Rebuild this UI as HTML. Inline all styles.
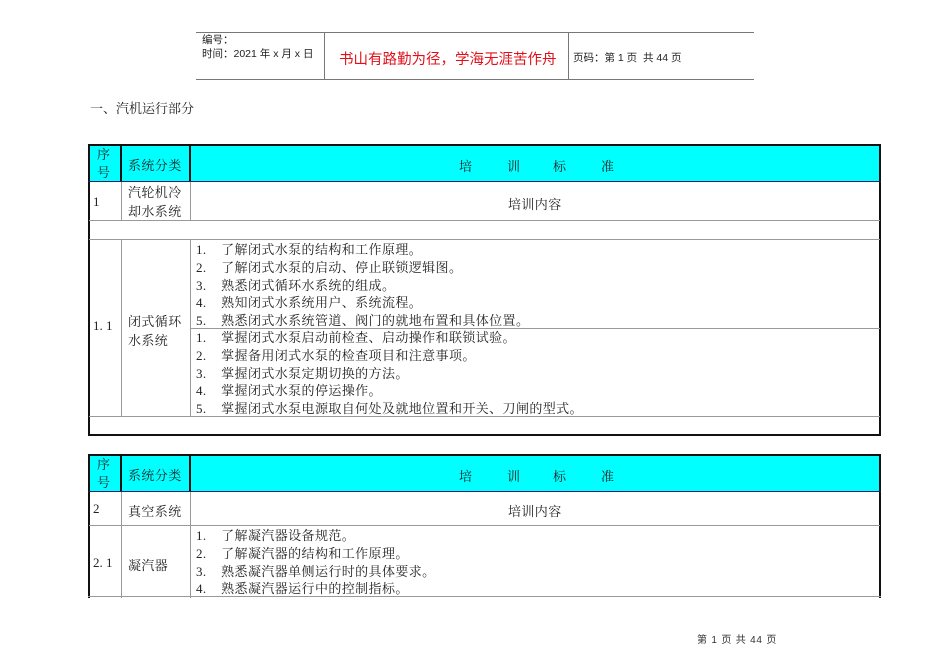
<!DOCTYPE html>
<html><head><meta charset="utf-8"><style>
body{margin:0;background:#fff;width:950px;height:672px;position:relative;overflow:hidden;font-family:"Liberation Serif","Noto Serif CJK SC",serif;font-size:13px;color:#222}
.a{position:absolute;white-space:nowrap}
.hl{position:absolute;background:#777}
.b{position:absolute;background:#111}
.g{position:absolute;background:#999}
.sans{font-family:"Liberation Sans","Noto Sans CJK SC",sans-serif}
.cy{position:absolute;background:#00ffff}
.li{letter-spacing:0.4px}
</style></head><body>
<!-- header -->
<div class="hl" style="left:196px;top:32px;width:558px;height:1px"></div>
<div class="hl" style="left:196px;top:79px;width:558px;height:1px"></div>
<div class="hl" style="left:324px;top:32px;width:1px;height:48px"></div>
<div class="hl" style="left:568px;top:32px;width:1px;height:48px"></div>
<div class="a sans" style="left:202px;top:33px;font-size:10.5px;line-height:14px">编号：<br>时间：2021 年 x 月 x 日</div>
<div class="a sans" style="left:339px;top:48px;font-size:14.5px;color:#e0101a">书山有路勤为径，学海无涯苦作舟</div>
<div class="a sans" style="left:573px;top:50px;font-size:10.5px">页码：第 1 页&nbsp; 共 44 页</div>
<div class="a" style="left:90px;top:98px;font-size:13px">一、汽机运行部分</div>

<!-- table 1 -->
<div class="cy" style="left:88px;top:145px;width:793px;height:37px"></div>
<div class="b" style="left:88px;top:144px;width:793px;height:2px"></div>
<div class="b" style="left:88px;top:434px;width:793px;height:2px"></div>
<div class="b" style="left:88px;top:144px;width:2px;height:292px"></div>
<div class="b" style="left:879px;top:144px;width:2px;height:292px"></div>
<div class="b" style="left:120px;top:145px;width:2px;height:37px"></div>
<div class="b" style="left:189px;top:145px;width:2px;height:37px"></div>
<div class="b" style="left:88px;top:181px;width:793px;height:1px;background:#226"></div>
<div class="g" style="left:121px;top:182px;width:1px;height:38px"></div>
<div class="g" style="left:190px;top:182px;width:1px;height:38px"></div>
<div class="g" style="left:89px;top:220px;width:791px;height:1px"></div>
<div class="g" style="left:89px;top:239px;width:791px;height:1px"></div>
<div class="g" style="left:121px;top:239px;width:1px;height:177px"></div>
<div class="g" style="left:190px;top:239px;width:1px;height:177px"></div>
<div class="g" style="left:190px;top:328px;width:690px;height:1px"></div>
<div class="g" style="left:89px;top:416px;width:791px;height:1px"></div>
<div class="a" style="left:97px;top:146px;line-height:18px">序<br>号</div>
<div class="a li" style="left:128px;top:155px">系统分类</div>
<div class="a" style="left:459px;top:156px">培</div>
<div class="a" style="left:507px;top:156px">训</div>
<div class="a" style="left:553px;top:156px">标</div>
<div class="a" style="left:601px;top:156px">准</div>
<div class="a" style="left:93px;top:194px">1</div>
<div class="a li" style="left:128px;top:183px;line-height:19px">汽轮机冷<br>却水系统</div>
<div class="a li" style="left:508px;top:194px">培训内容</div>
<div class="a" style="left:93px;top:318px">1. 1</div>
<div class="a li" style="left:128px;top:312px;line-height:19px">闭式循环<br>水系统</div>
<div class="a li" style="left:196px;top:241px;line-height:17.8px">1.&nbsp;&nbsp;&nbsp; 了解闭式水泵的结构和工作原理。<br>2.&nbsp;&nbsp;&nbsp; 了解闭式水泵的启动、停止联锁逻辑图。<br>3.&nbsp;&nbsp;&nbsp; 熟悉闭式循环水系统的组成。<br>4.&nbsp;&nbsp;&nbsp; 熟知闭式水系统用户、系统流程。<br>5.&nbsp;&nbsp;&nbsp; 熟悉闭式水系统管道、阀门的就地布置和具体位置。</div>
<div class="a li" style="left:196px;top:329px;line-height:17.8px">1.&nbsp;&nbsp;&nbsp; 掌握闭式水泵启动前检查、启动操作和联锁试验。<br>2.&nbsp;&nbsp;&nbsp; 掌握备用闭式水泵的检查项目和注意事项。<br>3.&nbsp;&nbsp;&nbsp; 掌握闭式水泵定期切换的方法。<br>4.&nbsp;&nbsp;&nbsp; 掌握闭式水泵的停运操作。<br>5.&nbsp;&nbsp;&nbsp; 掌握闭式水泵电源取自何处及就地位置和开关、刀闸的型式。</div>

<!-- table 2 -->
<div class="cy" style="left:88px;top:455px;width:793px;height:37px"></div>
<div class="b" style="left:88px;top:454px;width:793px;height:2px"></div>
<div class="b" style="left:88px;top:454px;width:2px;height:144px"></div>
<div class="b" style="left:879px;top:454px;width:2px;height:144px"></div>
<div class="b" style="left:120px;top:455px;width:2px;height:37px"></div>
<div class="b" style="left:189px;top:455px;width:2px;height:37px"></div>
<div class="b" style="left:88px;top:491px;width:793px;height:1px;background:#226"></div>
<div class="g" style="left:121px;top:492px;width:1px;height:106px"></div>
<div class="g" style="left:190px;top:492px;width:1px;height:106px"></div>
<div class="g" style="left:89px;top:525px;width:791px;height:1px"></div>
<div class="g" style="left:88px;top:596px;width:793px;height:1px"></div>
<div class="a" style="left:97px;top:456px;line-height:18px">序<br>号</div>
<div class="a li" style="left:128px;top:465px">系统分类</div>
<div class="a" style="left:459px;top:466px">培</div>
<div class="a" style="left:507px;top:466px">训</div>
<div class="a" style="left:553px;top:466px">标</div>
<div class="a" style="left:601px;top:466px">准</div>
<div class="a" style="left:93px;top:501px">2</div>
<div class="a li" style="left:128px;top:501px">真空系统</div>
<div class="a li" style="left:508px;top:501px">培训内容</div>
<div class="a" style="left:93px;top:555px">2. 1</div>
<div class="a li" style="left:128px;top:555px">凝汽器</div>
<div class="a li" style="left:196px;top:527px;line-height:17.8px">1.&nbsp;&nbsp;&nbsp; 了解凝汽器设备规范。<br>2.&nbsp;&nbsp;&nbsp; 了解凝汽器的结构和工作原理。<br>3.&nbsp;&nbsp;&nbsp; 熟悉凝汽器单侧运行时的具体要求。<br>4.&nbsp;&nbsp;&nbsp; 熟悉凝汽器运行中的控制指标。</div>

<div class="a sans" style="left:697px;top:631px;font-size:10px;color:#333;letter-spacing:0.8px">第 1 页 共 44 页</div>
</body></html>
